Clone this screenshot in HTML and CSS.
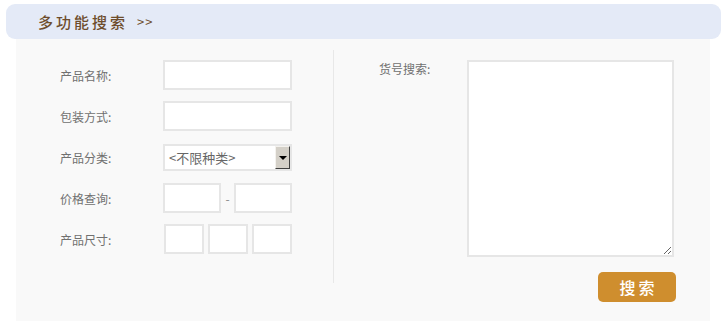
FILE: index.html
```html
<!DOCTYPE html>
<html lang="zh-CN">
<head>
    <meta charset="UTF-8">
    <title>多功能搜索</title>
    <link rel="stylesheet" href="styles.css">
</head>
<body>
    <div class="search-head">
        <span class="head-title">多功能搜索</span>
        <span class="head-more">&gt;&gt;</span>
    </div>
    <div class="search-box">
        <div class="col-left">
            <div class="row">
                <label class="lbl">产品名称:</label>
                <input type="text" class="txt txt-wide">
            </div>
            <div class="row">
                <label class="lbl">包装方式:</label>
                <input type="text" class="txt txt-wide">
            </div>
            <div class="row">
                <label class="lbl">产品分类:</label>
                <div class="fake-select">
                    <span class="sel-text">&lt;不限种类&gt;</span>
                    <span class="sel-btn"><i class="arrow"></i></span>
                </div>
            </div>
            <div class="row">
                <label class="lbl">价格查询:</label>
                <div class="price">
                    <input type="text" class="txt txt-price">
                    <span class="dash">-</span>
                    <input type="text" class="txt txt-price">
                </div>
            </div>
            <div class="row">
                <label class="lbl">产品尺寸:</label>
                <div class="size">
                    <input type="text" class="txt txt-size">
                    <input type="text" class="txt txt-size">
                    <input type="text" class="txt txt-size">
                </div>
            </div>
        </div>
        <div class="col-right">
            <div class="code-row">
                <label class="lbl lbl-code">货号搜索:</label>
                <textarea class="code-area"></textarea>
            </div>
            <div class="btn-row">
                <button type="button" class="btn-search">搜索</button>
            </div>
        </div>
    </div>
</body>
</html>
```

FILE: styles.css
```css
* {
    margin: 0;
    padding: 0;
    box-sizing: border-box;
}

body {
    background: #fff;
    font-family: "Noto Sans CJK SC", "DejaVu Sans", sans-serif;
    font-size: 12px;
    color: #666;
}

/* header bar */
.search-head {
    margin: 4px 2px 0 6px;
    height: 35px;
    background: #e4eaf7;
    border-radius: 9px;
    padding-left: 32px;
    display: flex;
    align-items: center;
}

.head-title {
    font-size: 15px;
    font-weight: 500;
    letter-spacing: 3px;
    color: #6e4d2c;
}

.head-more {
    margin-left: 9px;
    font-size: 13px;
    letter-spacing: 1px;
    color: #6e4d2c;
}

/* main panel */
.search-box {
    margin-left: 16px;
    width: 694px;
    height: 282px;
    background: #f9f9f9;
    display: flex;
}

.col-left {
    width: 317px;
    padding: 21px 0 0 44px;
    display: flex;
    flex-direction: column;
    gap: 11px;
}

.row {
    display: flex;
    align-items: center;
    height: 30px;
}

.lbl {
    width: 103px;
    color: #707070;
    font-size: 12px;
}

.txt {
    height: 30px;
    border: 2px solid #e6e6e6;
    background: #fff;
    outline: none;
}

.txt-wide {
    width: 129px;
}

.fake-select {
    width: 129px;
    height: 27px;
    border: 2px solid #e6e6e6;
    background: #fff;
    display: flex;
    align-items: center;
    justify-content: space-between;
    margin-top: 1px;
}

.sel-text {
    padding-left: 4px;
    font-size: 13px;
    color: #666;
}

.sel-btn {
    width: 15px;
    height: 23px;
    background: #d4d0c8;
    border: 1px solid;
    border-color: #f4f2ee #404040 #404040 #f4f2ee;
    display: flex;
    align-items: center;
    justify-content: center;
}

.arrow {
    border-left: 4px solid transparent;
    border-right: 4px solid transparent;
    border-top: 4px solid #000;
}

.price {
    display: flex;
    align-items: center;
}

.txt-price {
    width: 58px;
}

.dash {
    width: 13px;
    text-align: center;
    color: #888;
}

.size {
    display: flex;
    gap: 4px;
    padding-left: 1px;
}

.txt-size {
    width: 40px;
}

/* right side */
.col-right {
    width: 377px;
    margin-top: 11px;
    height: 233px;
    border-left: 1px solid #e8e8e8;
    padding: 10px 0 0 45px;
}

.code-row {
    display: flex;
    align-items: flex-start;
}

.lbl-code {
    width: 88px;
}

.code-area {
    width: 207px;
    height: 197px;
    border: 2px solid #e6e6e6;
    background: #fff;
    outline: none;
}

.btn-row {
    display: flex;
    justify-content: flex-end;
    padding-right: 34px;
    margin-top: 15px;
}

.btn-search {
    width: 78px;
    height: 30px;
    border: none;
    border-radius: 5px;
    background: #cf8e2e;
    color: #fff;
    font-family: "Noto Sans CJK SC", sans-serif;
    font-size: 16px;
    font-weight: 500;
    letter-spacing: 3px;
    padding-left: 3px;
    cursor: pointer;
}
```
